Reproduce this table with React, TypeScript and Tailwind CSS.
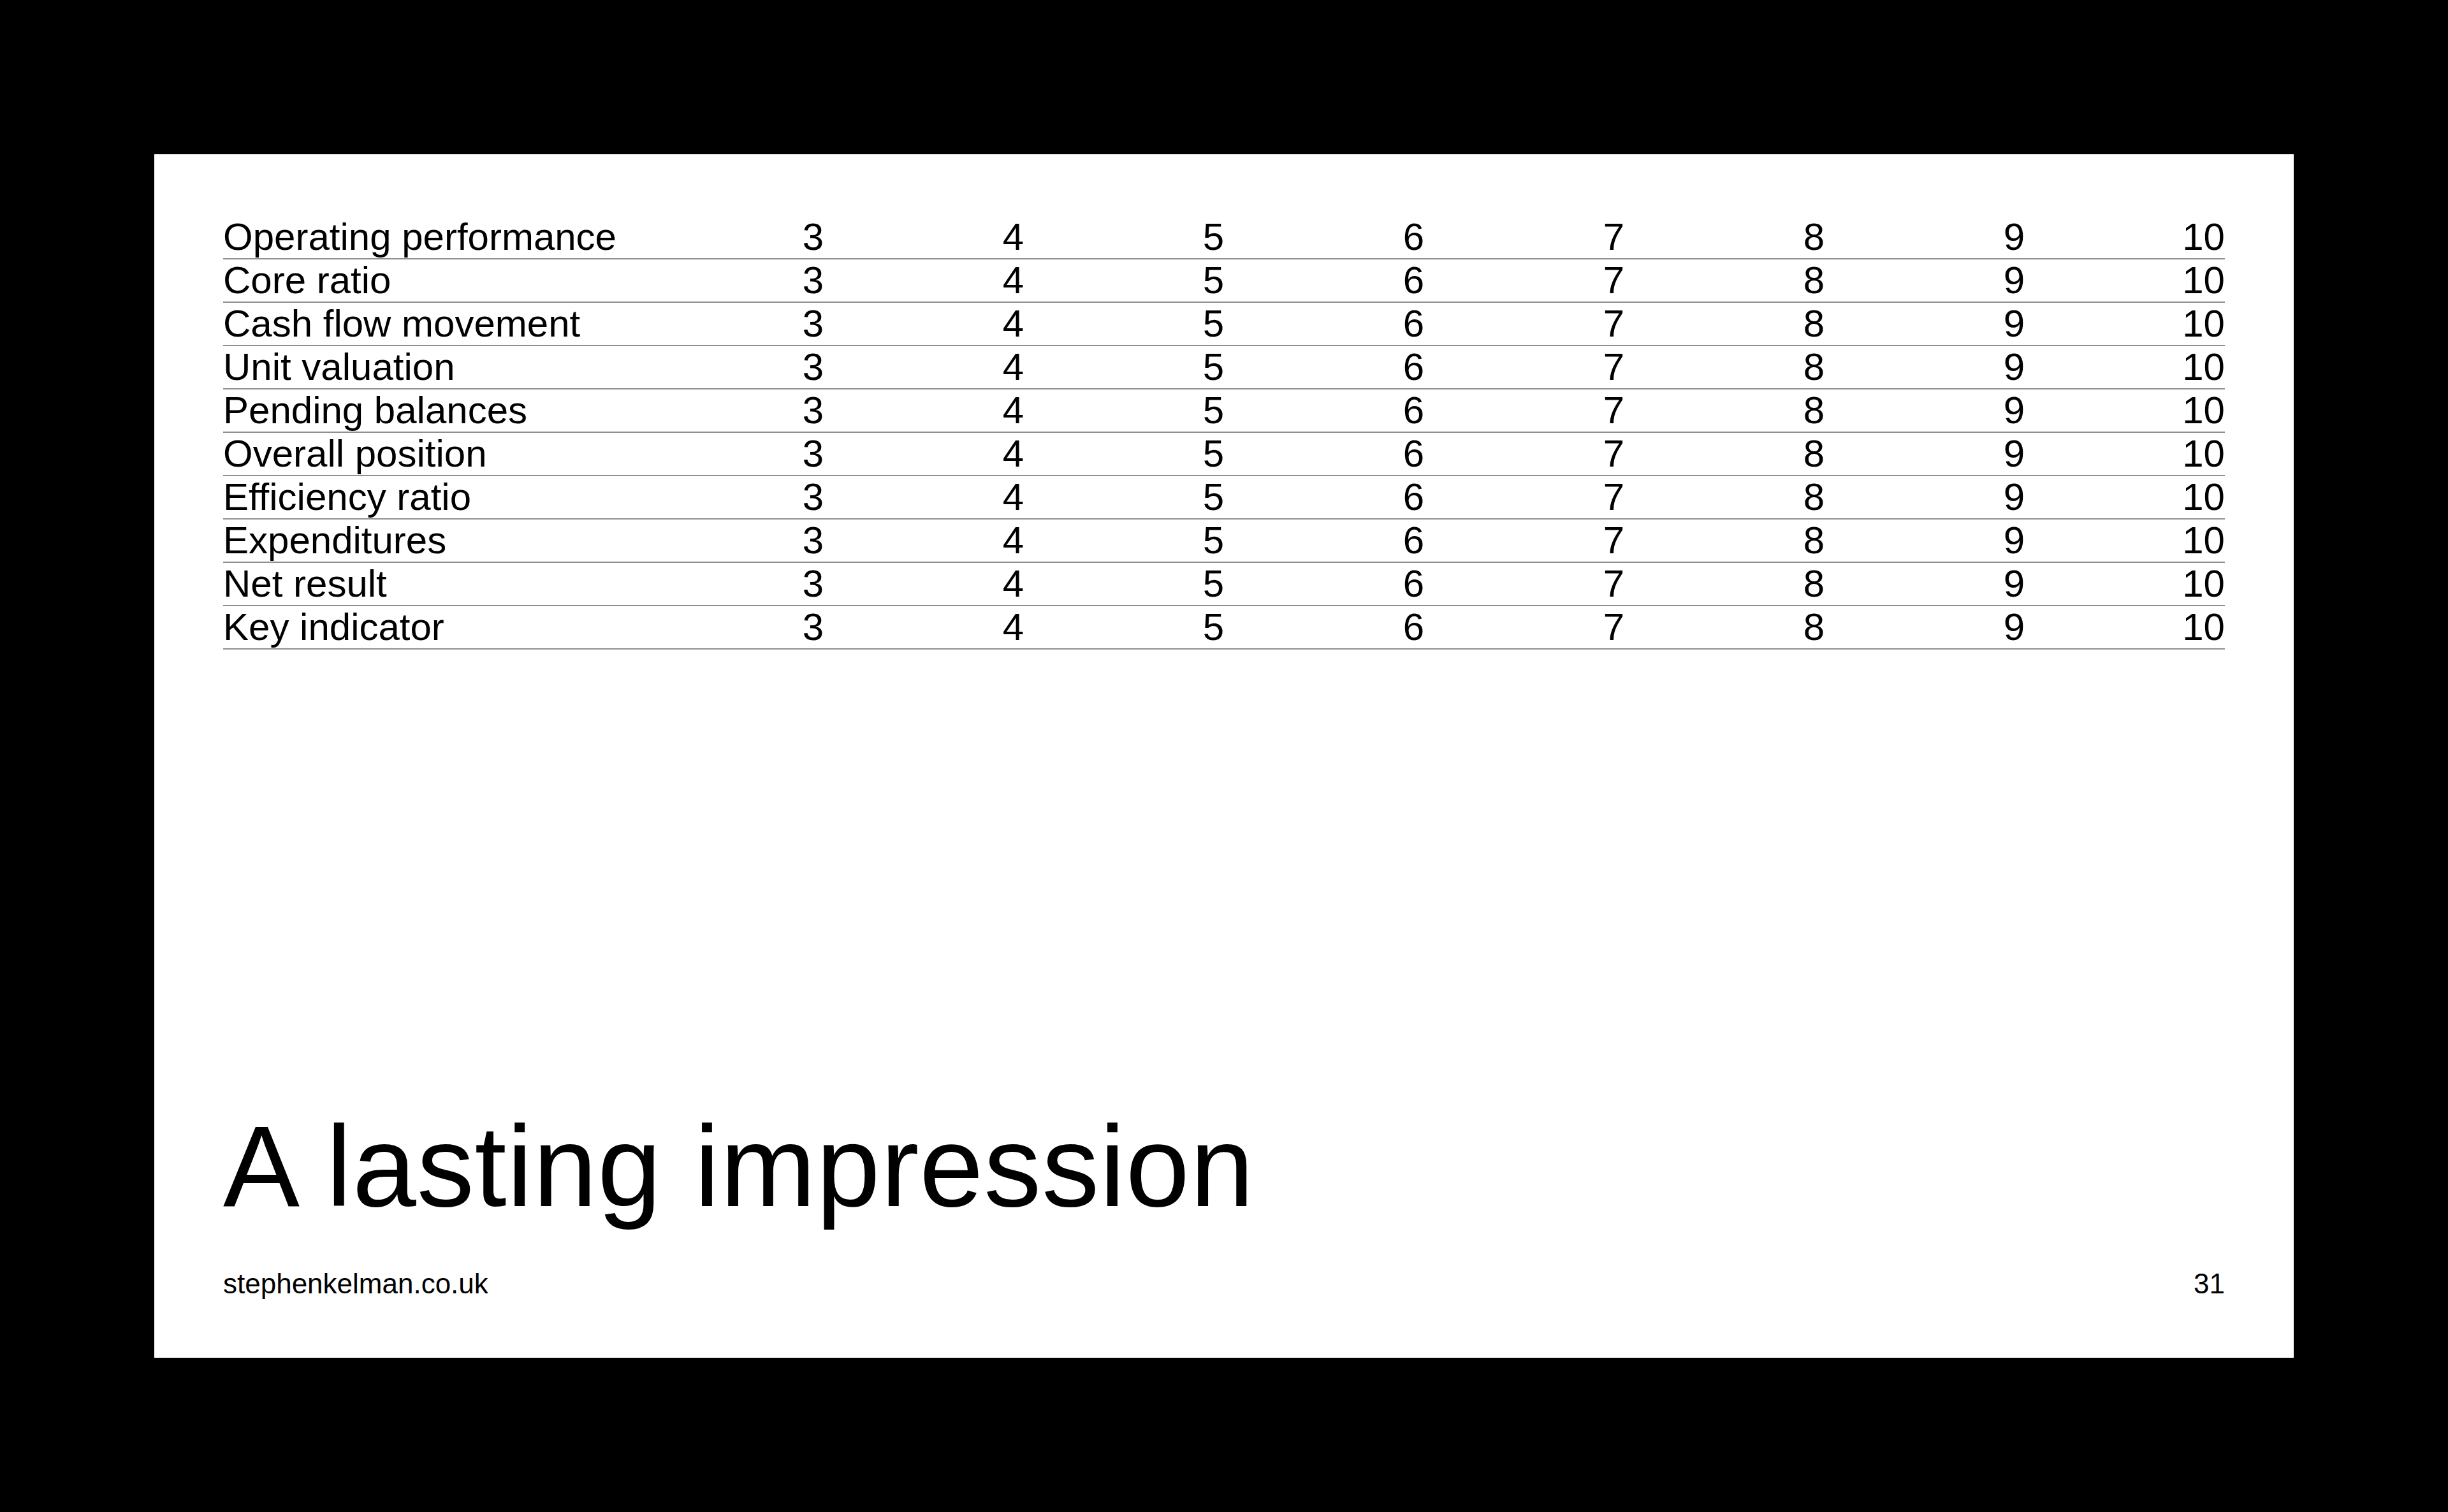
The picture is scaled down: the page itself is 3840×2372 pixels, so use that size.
import React from "react";

const labels = [
  "Operating performance",
  "Core ratio",
  "Cash flow movement",
  "Unit valuation",
  "Pending balances",
  "Overall position",
  "Efficiency ratio",
  "Expenditures",
  "Net result",
  "Key indicator",
];

const values = [3, 4, 5, 6, 7, 8, 9, 10];

export default function App() {
  return (
    <div
      className="min-h-screen h-[2372px] bg-black p-[242px] flex text-black"
      style={{ fontFamily: '"Liberation Sans", Arial, Helvetica, sans-serif' }}
    >
      <div className="flex-1 bg-white flex flex-col px-[108px] pt-[97px] pb-[92px]">
        <div className="flex flex-col">
          {labels.map((label) => (
            <div
              key={label}
              className="grid grid-cols-10 border-b-2 border-[#8f8f8f] text-[60px] leading-[66px]"
            >
              <div className="col-span-2 whitespace-nowrap">{label}</div>
              {values.map((v) => (
                <div key={v} className="text-right">
                  {v}
                </div>
              ))}
            </div>
          ))}
        </div>
        <h1 className="mt-auto mb-[70px] text-[180px] leading-[180px] font-normal whitespace-nowrap tracking-[0.85px]">
          A lasting impression
        </h1>
        <div className="flex justify-between text-[44px] leading-[48px]">
          <span>stephenkelman.co.uk</span>
          <span>31</span>
        </div>
      </div>
    </div>
  );
}
